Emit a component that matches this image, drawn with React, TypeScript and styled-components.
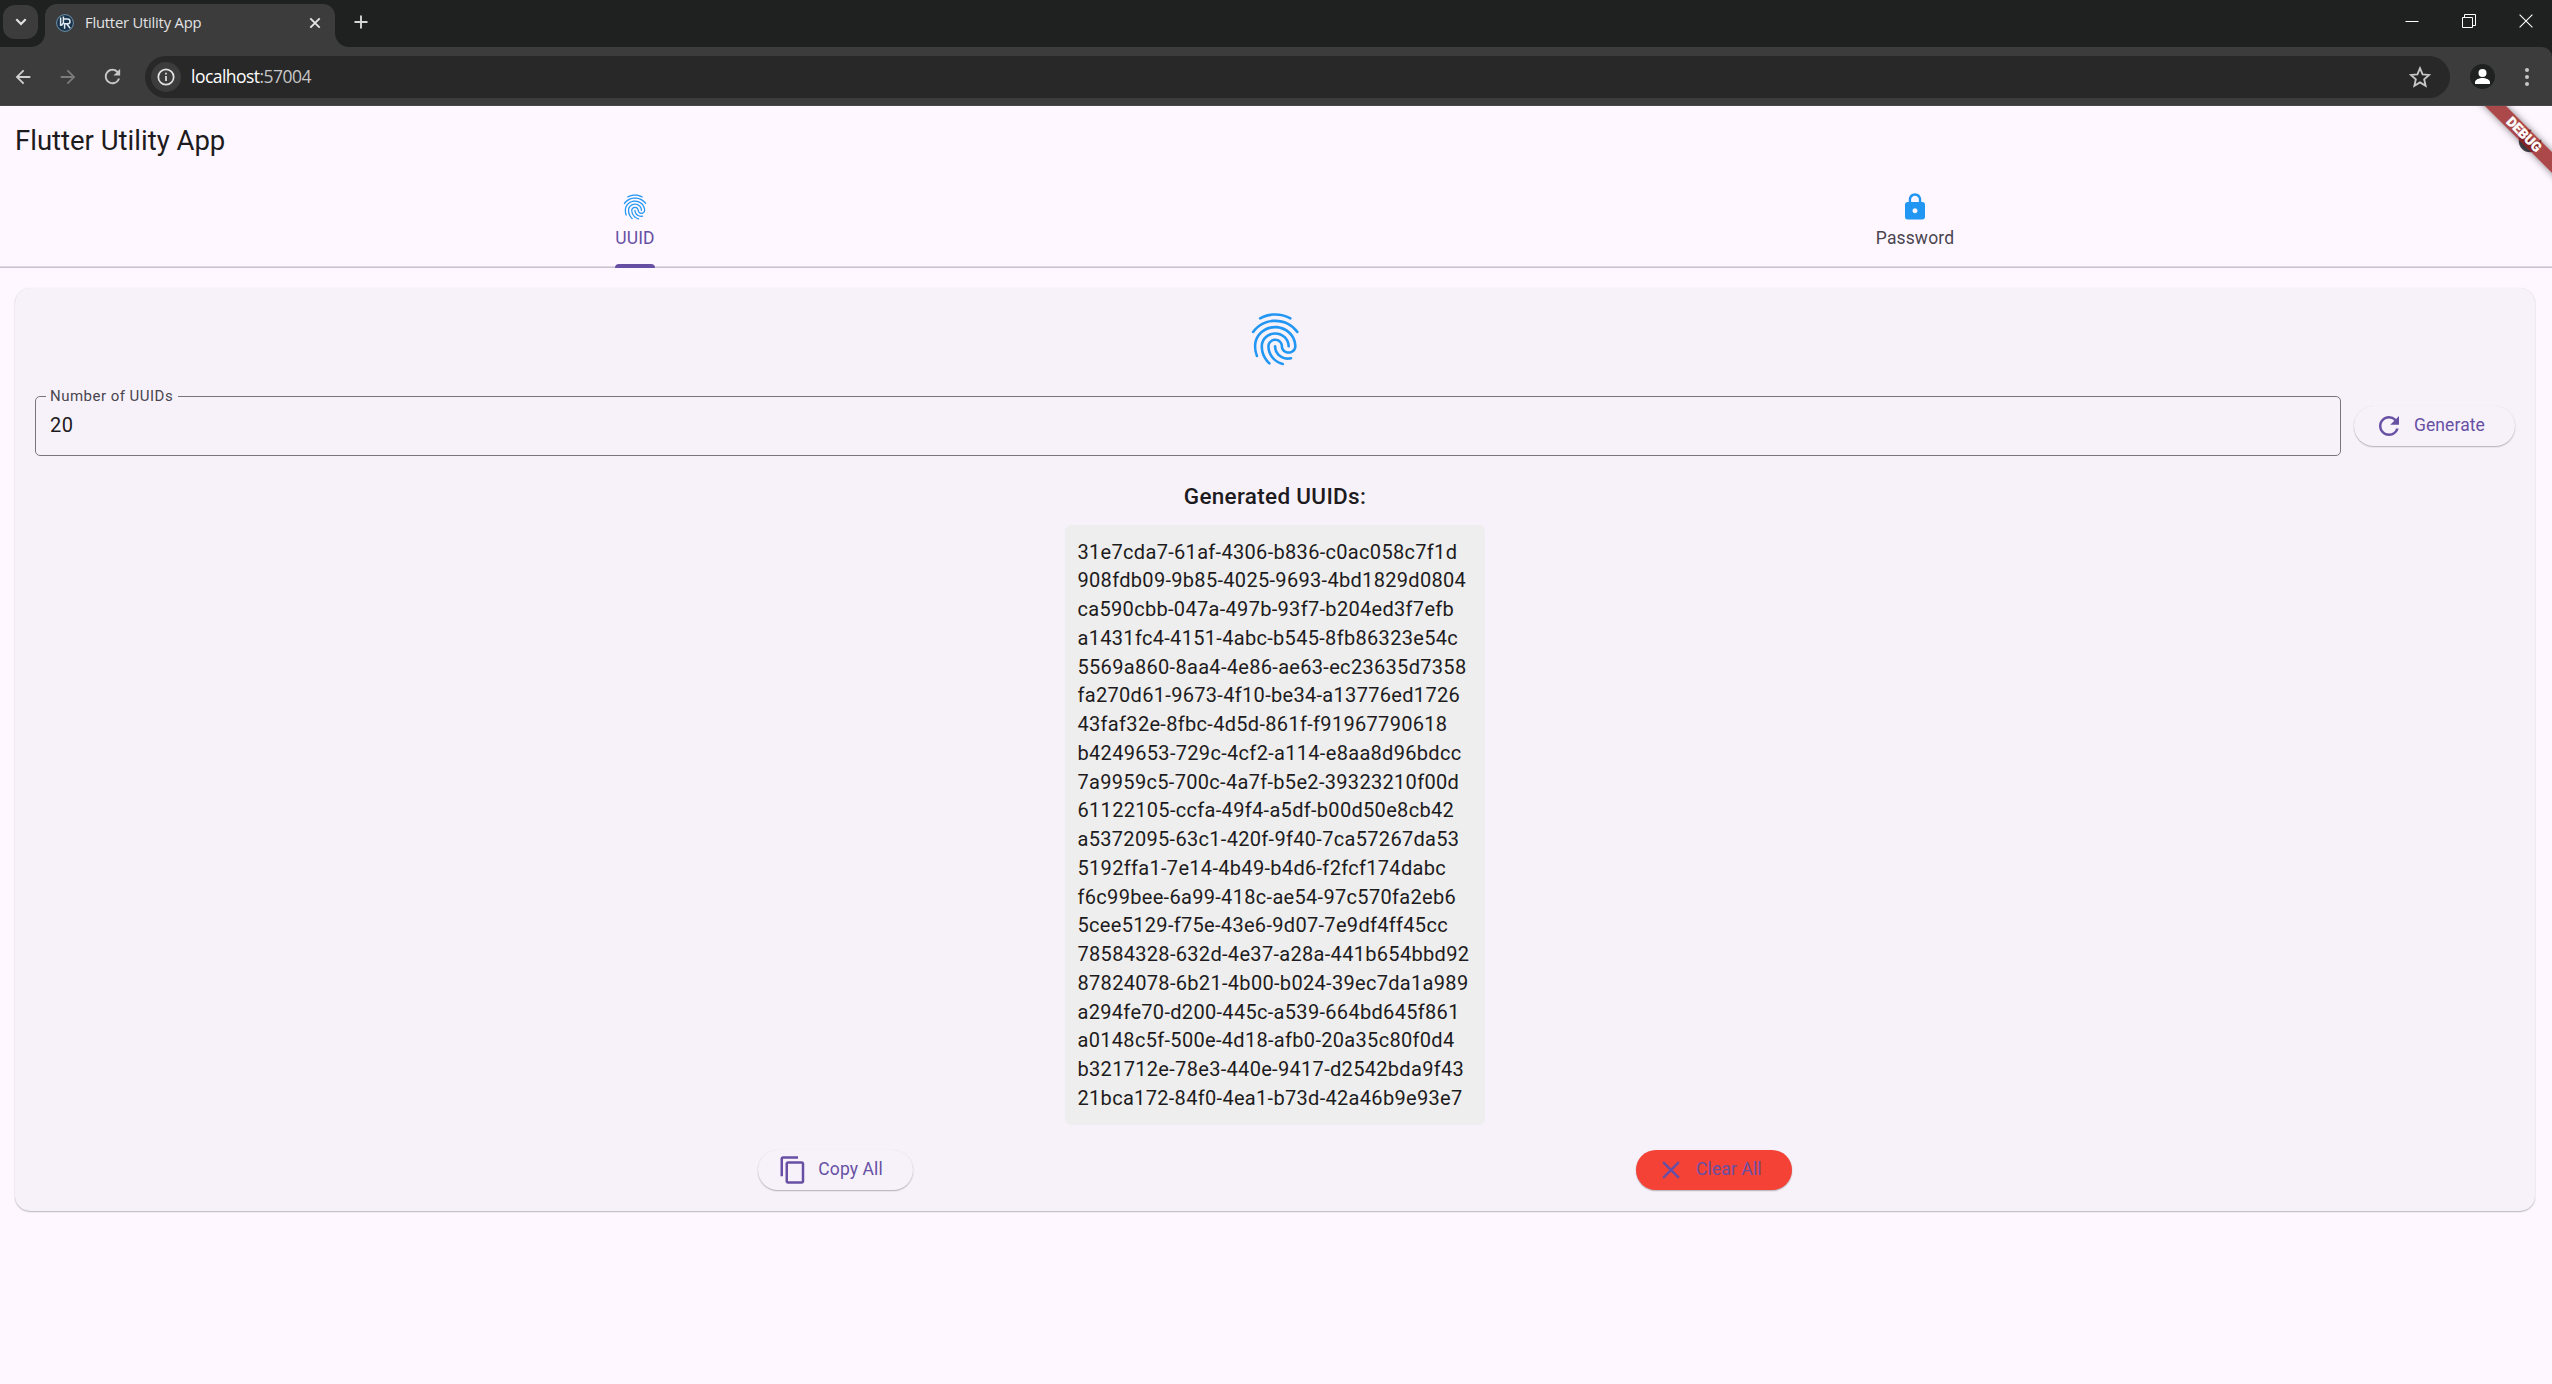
import React from 'react';
import styled, { createGlobalStyle } from 'styled-components';
import {
  MdArrowBack,
  MdArrowForward,
  MdClear,
  MdContentCopy,
  MdDarkMode,
  MdFingerprint,
  MdLock,
  MdRefresh,
} from 'react-icons/md';

const colors = {
  surface: '#fef7ff',
  card: '#f7f2fa',
  primary: '#6750a4',
  onSurface: '#1d1b20',
  muted: '#49454f',
  outline: '#79747e',
  divider: '#cac4d0',
  blue: '#2196f3',
  red: '#f44336',
  frame: '#1f2120',
  toolbar: '#3c3c3c',
  omnibox: '#282828',
};

const GlobalStyle = createGlobalStyle`
  * { box-sizing: border-box; }
  body {
    margin: 0;
    background: ${colors.surface};
    font-family: Roboto, "Liberation Sans", sans-serif;
    color: ${colors.onSurface};
    overflow: hidden;
  }
  svg { display: block; flex: none; }
`;

const Window = styled.div`
  display: flex;
  flex-direction: column;
  width: 100%;
  height: 100vh;
  overflow: hidden;
`;

const TabStrip = styled.div`
  display: flex;
  align-items: flex-start;
  height: 47px;
  background: ${colors.frame};
  color: #e3e3e3;
  font-family: "Open Sans", "Noto Sans", sans-serif;
`;

const TabSearch = styled.div`
  display: grid;
  place-items: center;
  width: 35px;
  height: 34px;
  margin: 5px 7px 0 3px;
  border-radius: 12px;
  background: ${colors.toolbar};
`;

const BrowserTab = styled.div`
  position: relative;
  display: flex;
  align-items: center;
  width: 290px;
  height: 43px;
  margin-top: 4px;
  padding: 0 14px 6px 11px;
  border-radius: 12px 12px 0 0;
  background: ${colors.toolbar};

  &::before,
  &::after {
    content: '';
    position: absolute;
    bottom: 0;
    width: 14px;
    height: 14px;
  }
  &::before {
    left: -14px;
    background: radial-gradient(circle at 0 0, transparent 13.5px, ${colors.toolbar} 14.5px);
  }
  &::after {
    right: -14px;
    background: radial-gradient(circle at 100% 0, transparent 13.5px, ${colors.toolbar} 14.5px);
  }
`;

const BrowserTabTitle = styled.span`
  flex: 1;
  margin: 0 0 1px 11px;
  font-size: 14.75px;
  letter-spacing: -0.2px;
  line-height: 20px;
`;

const NewTab = styled.div`
  display: grid;
  place-items: center;
  width: 34px;
  height: 34px;
  margin: 5px 0 0 9px;
`;

const WindowButtons = styled.div`
  display: flex;
  align-items: center;
  gap: 43px;
  margin: 14px 19px 0 auto;
`;

const Toolbar = styled.div`
  display: flex;
  align-items: center;
  height: 59px;
  padding: 0 16px 0 12px;
  background: ${colors.toolbar};
  box-shadow: inset 0 -1px 0 #474747;
  border-radius: 0 10px 0 0;
  color: #c7c7c7;
  font-family: "Open Sans", "Noto Sans", sans-serif;
`;

const ToolbarBacking = styled.div`
  background: ${colors.frame};
`;

const NavIcons = styled.div`
  display: flex;
  align-items: center;
  gap: 22.5px;
  margin-right: 21px;
`;

const Omnibox = styled.div`
  display: flex;
  flex: 1;
  align-items: center;
  height: 42px;
  padding: 0 19px 0 6px;
  border-radius: 21px;
  background: ${colors.omnibox};
`;

const SiteInfo = styled.div`
  display: grid;
  place-items: center;
  width: 30px;
  height: 30px;
  border-radius: 50%;
  background: ${colors.toolbar};
`;

const Url = styled.span`
  flex: 1;
  margin: 0 0 2px 10px;
  color: #c7c7c7;
  font-size: 17.5px;
  letter-spacing: -0.53px;
  line-height: 24px;

  b {
    color: #fff;
    font-weight: 400;
  }
`;

const ToolbarEnd = styled.div`
  display: flex;
  align-items: center;
  gap: 23px;
  margin-left: 20px;
`;

const Page = styled.main`
  position: relative;
  flex: 1;
  padding-right: 2px;
  overflow: hidden;
  background: ${colors.surface};
`;

const AppBar = styled.header`
  display: flex;
  align-items: center;
  justify-content: space-between;
  height: 70px;
  padding: 0 5px 0 15px;
  color: ${colors.muted};
`;

const AppTitle = styled.h1`
  margin: 0 0 2px;
  color: ${colors.onSurface};
  font-size: 27.5px;
  font-weight: 400;
  line-height: 35px;
`;

const TabBar = styled.nav`
  display: grid;
  grid-template-columns: 1270px 1fr;
  column-gap: 10px;
  height: 92px;
  margin-right: -2px;
  padding-right: 2px;
  border-bottom: 1px solid ${colors.divider};
  box-shadow: inset 0 -1px 0 #dfd9e4;
`;

const AppTab = styled.div<{ $active?: boolean }>`
  position: relative;
  display: flex;
  flex-direction: column;
  align-items: center;
  justify-self: center;
  padding-top: 16px;
  color: ${(p) => (p.$active ? colors.primary : colors.muted)};
  font-size: 17.5px;
  letter-spacing: 0.125px;
  line-height: 25px;

  svg {
    margin-bottom: 3.5px;
    color: ${colors.blue};
  }

  &::after {
    content: '';
    display: ${(p) => (p.$active ? 'block' : 'none')};
    position: absolute;
    left: 0;
    right: 0;
    bottom: -1px;
    height: 4px;
    border-radius: 4px 4px 0 0;
    background: ${colors.primary};
  }
`;

const Card = styled.section`
  display: flex;
  flex-direction: column;
  align-items: center;
  height: 923px;
  margin: 20px 15px 0;
  padding: 20px;
  border-radius: 15px;
  background: ${colors.card};
  box-shadow: 0 1px 1.5px rgba(0, 0, 0, 0.26), 0 0 1px rgba(0, 0, 0, 0.1);
`;

const InputRow = styled.div`
  display: flex;
  align-items: center;
  gap: 12.5px;
  width: 100%;
  margin-top: 25px;
`;

const Field = styled.div`
  position: relative;
  display: flex;
  flex: 1;
  align-items: center;
  height: 60px;
  padding: 0 15px 2px 14px;
  border: 1px solid ${colors.outline};
  border-radius: 5px;
  font-size: 20px;
  letter-spacing: 0.625px;
`;

const FieldLabel = styled.label`
  position: absolute;
  top: -11px;
  left: 10px;
  padding: 0 5px 0 4px;
  background: ${colors.card};
  color: ${colors.muted};
  font-size: 15px;
  letter-spacing: 0.48px;
  line-height: 20px;
`;

const Button = styled.button<{ $danger?: boolean }>`
  display: flex;
  align-items: center;
  gap: 10px;
  height: 40px;
  margin: 0;
  padding: 0 30px 0 20px;
  border: 0;
  border-radius: 20px;
  background: ${(p) => (p.$danger ? colors.red : colors.card)};
  box-shadow: 0 1px 1.5px rgba(0, 0, 0, 0.28), 0 0 1px rgba(0, 0, 0, 0.06);
  color: ${colors.primary};
  font: 400 17.5px/25px Roboto, "Liberation Sans", sans-serif;
  letter-spacing: 0.1px;
`;

const Heading = styled.h2`
  margin: 24px 0 12px;
  font-size: 22.5px;
  font-weight: 500;
  letter-spacing: 0.31px;
  line-height: 33px;
`;

const UuidList = styled.ul`
  width: 420px;
  margin: 0;
  padding: 13px 12.5px 12px;
  border-radius: 6px;
  background: #eee;
  font-size: 20px;
  letter-spacing: 0.3125px;
  line-height: 28.75px;
  list-style: none;
  white-space: nowrap;
`;

const Actions = styled.div`
  display: flex;
  justify-content: space-evenly;
  width: 100%;
  margin-top: 25px;
`;

const BannerCorner = styled.div`
  position: absolute;
  top: 0;
  right: 0;
  width: 110px;
  height: 110px;
  overflow: hidden;
  pointer-events: none;
`;

const Banner = styled.div`
  position: absolute;
  top: 20.75px;
  left: 1.75px;
  width: 160px;
  height: 15px;
  transform: rotate(45deg);
  background: linear-gradient(rgba(183, 28, 28, 0.63), rgba(183, 28, 28, 0.63)), rgba(0, 0, 0, 0.4);
  box-shadow: 0 0 7.5px rgba(0, 0, 0, 0.5);
  color: #fff;
  font-size: 13.5px;
  font-weight: 900;
  line-height: 15px;
  text-align: center;
  -webkit-text-stroke: 0.3px #fff;
`;

const uuids = [
  '31e7cda7-61af-4306-b836-c0ac058c7f1d',
  '908fdb09-9b85-4025-9693-4bd1829d0804',
  'ca590cbb-047a-497b-93f7-b204ed3f7efb',
  'a1431fc4-4151-4abc-b545-8fb86323e54c',
  '5569a860-8aa4-4e86-ae63-ec23635d7358',
  'fa270d61-9673-4f10-be34-a13776ed1726',
  '43faf32e-8fbc-4d5d-861f-f91967790618',
  'b4249653-729c-4cf2-a114-e8aa8d96bdcc',
  '7a9959c5-700c-4a7f-b5e2-39323210f00d',
  '61122105-ccfa-49f4-a5df-b00d50e8cb42',
  'a5372095-63c1-420f-9f40-7ca57267da53',
  '5192ffa1-7e14-4b49-b4d6-f2fcf174dabc',
  'f6c99bee-6a99-418c-ae54-97c570fa2eb6',
  '5cee5129-f75e-43e6-9d07-7e9df4ff45cc',
  '78584328-632d-4e37-a28a-441b654bbd92',
  '87824078-6b21-4b00-b024-39ec7da1a989',
  'a294fe70-d200-445c-a539-664bd645f861',
  'a0148c5f-500e-4d18-afb0-20a35c80f0d4',
  'b321712e-78e3-440e-9417-d2542bda9f43',
  '21bca172-84f0-4ea1-b73d-42a46b9e93e7',
];

const Favicon = () => (
  <svg width="18" height="18" viewBox="0 0 18 18" fill="none">
    <circle cx="9" cy="9" r="8.4" fill="#17324a" stroke="#6f93ab" strokeWidth="1" />
    <path d="M4.6 3.5v8.5M7.4 2.5v6.6l-2 2.4M8 5h3.6a2.3 2.3 0 0 1 0 4.8H8.6v5M10.6 9.8l3.6 4.4" stroke="#dfeaf1" strokeWidth="1.5" />
  </svg>
);

const BrowserChrome = () => (
  <>
    <TabStrip>
      <TabSearch>
        <svg width="12" height="8" viewBox="0 0 12 8" fill="none" stroke="#e3e3e3" strokeWidth="2.1">
          <path d="M1.3 1.3 6 6l4.7-4.7" />
        </svg>
      </TabSearch>
      <BrowserTab>
        <Favicon />
        <BrowserTabTitle>Flutter Utility App</BrowserTabTitle>
        <svg width="12" height="12" viewBox="0 0 12 12" stroke="#e3e3e3" strokeWidth="1.9">
          <path d="m1.3 1.3 9.4 9.4M10.7 1.3l-9.4 9.4" />
        </svg>
      </BrowserTab>
      <NewTab>
        <svg width="14" height="14" viewBox="0 0 14 14" stroke="#d6d6d6" strokeWidth="1.9">
          <path d="M7 .5v13M.5 7h13" />
        </svg>
      </NewTab>
      <WindowButtons>
        <svg width="14" height="14" viewBox="0 0 14 14" stroke="#fff">
          <path d="M.5 7.5h13" />
        </svg>
        <svg width="14" height="14" viewBox="0 0 14 14" fill="none" stroke="#fff">
          <path d="M.5 3.5h10v10H.5zM2.5 3.5v-3h11v11h-3" />
        </svg>
        <svg width="14" height="14" viewBox="0 0 14 14" stroke="#fff" strokeWidth="1.1">
          <path d="m.6.6 12.8 12.8M13.4.6.6 13.4" />
        </svg>
      </WindowButtons>
    </TabStrip>
    <ToolbarBacking>
      <Toolbar>
        <NavIcons>
          <MdArrowBack size={22} color="#d0d0d0" />
          <MdArrowForward size={22} color="#7b7b7b" />
          <MdRefresh size={23} color="#c7c7c7" />
        </NavIcons>
        <Omnibox>
          <SiteInfo>
            <svg width="18" height="18" viewBox="0 0 18 18" fill="none" stroke="#e3e3e3" strokeWidth="1.7">
              <circle cx="9" cy="9" r="7.7" />
              <path d="M9 8v5M9 4.8v1.8" />
            </svg>
          </SiteInfo>
          <Url>
            <b>localhost</b>:57004
          </Url>
          <svg width="22" height="22" viewBox="2 1.8 18 18" fill="none" stroke="#c7c7c7" strokeWidth="1.5">
            <path d="m11 3.6 2.1 5 5.4.5-4.1 3.6 1.2 5.3-4.6-2.8L6.4 18l1.2-5.3-4.1-3.6 5.4-.5z" />
          </svg>
        </Omnibox>
        <ToolbarEnd>
          <svg width="25" height="25" viewBox="0 0 25 25">
            <circle cx="12.5" cy="12.5" r="12.5" fill="#1f2120" />
            <circle cx="12.5" cy="9" r="4" fill="#fff" />
            <path d="M5 20v-1.8c0-2.6 4.4-4.2 7.5-4.2s7.5 1.6 7.5 4.2V20z" fill="#fff" />
          </svg>
          <svg width="18" height="20" viewBox="0 0 18 20" fill="#c7c7c7">
            <circle cx="9" cy="3" r="2" />
            <circle cx="9" cy="10" r="2" />
            <circle cx="9" cy="17" r="2" />
          </svg>
        </ToolbarEnd>
      </Toolbar>
    </ToolbarBacking>
  </>
);

export default function App() {
  return (
    <Window>
      <GlobalStyle />
      <BrowserChrome />
      <Page>
        <AppBar>
          <AppTitle>Flutter Utility App</AppTitle>
          <MdDarkMode size={30} />
        </AppBar>
        <TabBar>
          <AppTab $active>
            <MdFingerprint size={30} />
            UUID
          </AppTab>
          <AppTab>
            <MdLock size={30} />
            Password
          </AppTab>
        </TabBar>
        <Card>
          <MdFingerprint size={62.5} color={colors.blue} />
          <InputRow>
            <Field>
              <FieldLabel>Number of UUIDs</FieldLabel>
              20
            </Field>
            <Button>
              <MdRefresh size={30} />
              Generate
            </Button>
          </InputRow>
          <Heading>Generated UUIDs:</Heading>
          <UuidList>
            {uuids.map((id) => (
              <li key={id}>{id}</li>
            ))}
          </UuidList>
          <Actions>
            <Button>
              <MdContentCopy size={30} />
              Copy All
            </Button>
            <Button $danger>
              <MdClear size={30} />
              Clear All
            </Button>
          </Actions>
        </Card>
        <BannerCorner>
          <Banner>DEBUG</Banner>
        </BannerCorner>
      </Page>
    </Window>
  );
}
